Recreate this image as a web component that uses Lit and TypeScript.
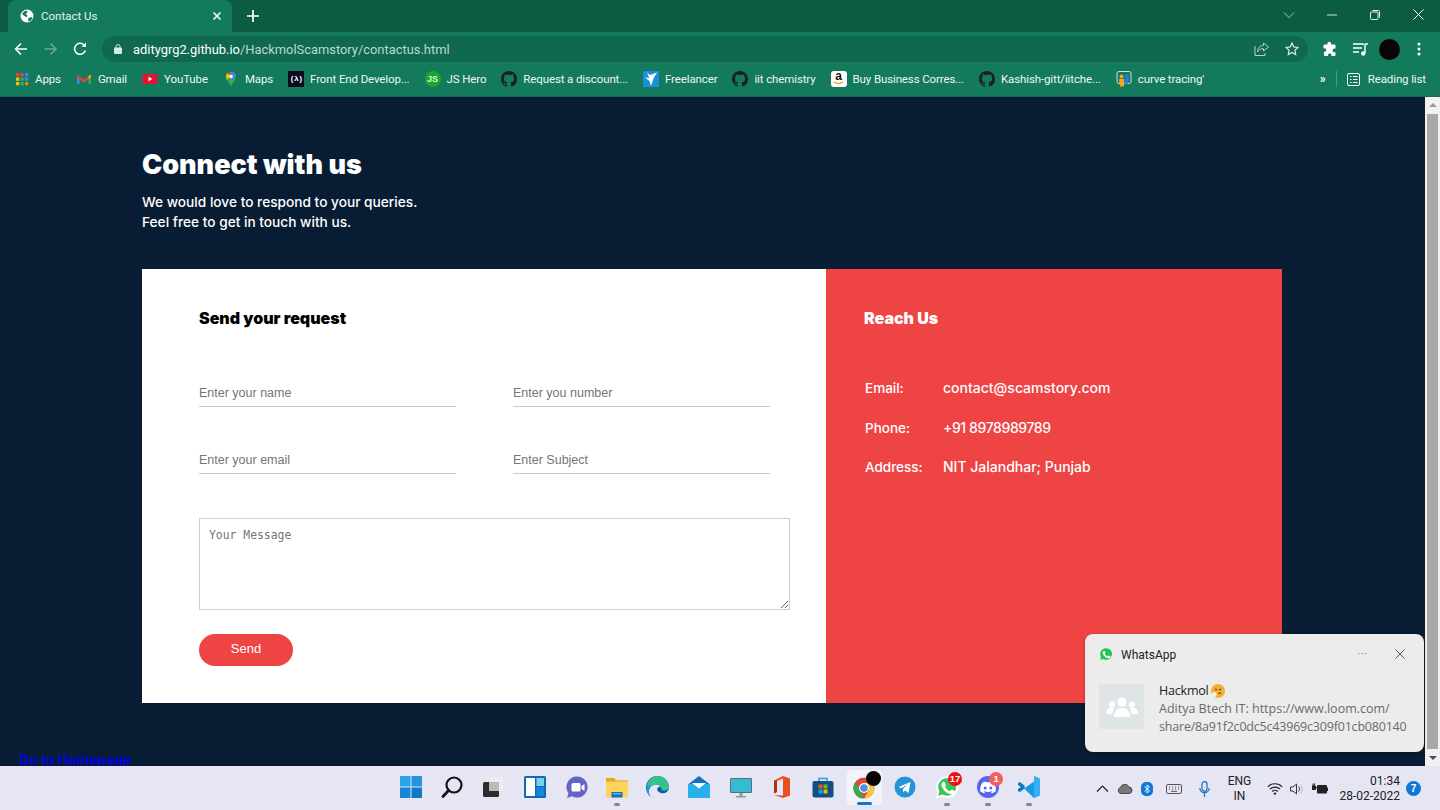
import {LitElement, css, html, svg} from "lit";
import {customElement} from "lit/decorators.js";

const GITHUB = "M8 0C3.58 0 0 3.58 0 8c0 3.54 2.29 6.53 5.47 7.59.4.07.55-.17.55-.38 0-.19-.01-.82-.01-1.49-2.01.37-2.53-.49-2.69-.94-.09-.23-.48-.94-.82-1.13-.28-.15-.68-.52-.01-.53.63-.01 1.08.58 1.23.82.72 1.21 1.87.87 2.33.66.07-.52.28-.87.51-1.07-1.78-.2-3.64-.89-3.64-3.95 0-.87.31-1.59.82-2.15-.08-.2-.36-1.02.08-2.12 0 0 .67-.21 2.2.82.64-.18 1.32-.27 2-.27.68 0 1.36.09 2 .27 1.53-1.04 2.2-.82 2.2-.82.44 1.1.16 1.92.08 2.12.51.56.82 1.27.82 2.15 0 3.07-1.87 3.75-3.65 3.95.29.25.54.73.54 1.48 0 1.07-.01 1.93-.01 2.2 0 .21.15.46.55.38A8.013 8.013 0 0016 8c0-4.42-3.58-8-8-8z";
const WA_BUBBLE = "M12 2a10 10 0 0 0-8.6 15L2 22l5.2-1.4A10 10 0 1 0 12 2z";
const WA_PHONE = "M8.6 6.8c-.3 0-.7.1-1 .5-.4.4-1.2 1.2-1.2 2.8s1.200 3.200 1.400 3.400c.2.200 2.300 3.700 5.700 5 2.800 1.100 3.400.900 4 .800.600-.100 2-.800 2.200-1.600.300-.800.300-1.400.200-1.600-.100-.100-.300-.200-.600-.400l-2.200-1.100c-.300-.100-.500-.200-.700.100l-1 1.300c-.200.200-.400.200-.700.100-1.300-.500-3.400-1.700-4.600-4.100-.200-.300 0-.500.100-.600l.700-.900c.100-.200.100-.400 0-.600L9.800 7.400c-.300-.600-.600-.600-.800-.600z";

const ghIcon = () => html`<svg width="16" height="16" viewBox="0 0 16 16"><path fill="#1b1f23" d=${GITHUB}/></svg>`;

const bookmarks = [
  {label: "Apps", icon: html`<svg width="14" height="16" viewBox="1 0 14 16">
    ${["#ea4335","#ea4335","#4285f4","#fbbc05","#34a853","#4285f4","#fbbc05","#34a853","#ea8600"].map((c, i) =>
      svg`<rect x=${2 + (i % 3) * 4.5} y=${2 + Math.floor(i / 3) * 4.5} width="3.300" height="3.300" fill=${c}/>`)}
  </svg>`},
  {label: "Gmail", icon: html`<svg width="16" height="16" viewBox="0 0 16 16">
    <path fill="#4285f4" d="M1 4v9h2.500V7z"/><path fill="#34a853" d="M15 4v9h-2.500V7z"/>
    <path fill="#ea4335" d="M1 3.500l7 5.300 7-5.300v3L8 11.500 1 6.500z"/><path fill="#fbbc05" d="M12.500 5.500L15 3.500V6l-2.500 2z"/></svg>`},
  {label: "YouTube", icon: html`<svg width="16" height="16" viewBox="0 0 16 16">
    <rect x="0.500" y="3" width="15" height="10" rx="2.500" fill="#e8112d"/><path fill="#fff" d="M6.500 5.800v4.400L10.500 8z"/></svg>`},
  {label: "Maps", icon: html`<svg width="16" height="16" viewBox="0 0 16 16">
    <path fill="#34a853" d="M8 15.500C6.800 12.500 3.500 10 3.500 6h9c0 4-3.300 6.500-4.500 9.500z"/>
    <path fill="#4285f4" d="M8 .5A5 5 0 0 1 13 5.500L9 8 7 3z"/><path fill="#ea4335" d="M8 .5A5 5 0 0 0 4.500 2L7 5z"/>
    <path fill="#fbbc05" d="M3 5.500a5 5 0 0 1 1.500-3.500L7 5 4 9a5 5 0 0 1-1-3.500z"/><circle cx="8" cy="5.500" r="1.800" fill="#fff"/></svg>`},
  {label: "Front End Develop...", icon: html`<span class="bm-fcc">(λ)</span>`},
  {label: "JS Hero", icon: html`<span class="bm-js">JS</span>`},
  {label: "Request a discount...", icon: ghIcon()},
  {label: "Freelancer", icon: html`<svg width="16" height="16" viewBox="0 0 16 16">
    <rect width="16" height="16" fill="#1c8fd8"/><path fill="#fff" d="M4 1.500l3 2.500 7-2.500-3.500 6L8 15 6.500 10 2 6.500l4.300.5z"/></svg>`},
  {label: "iit chemistry", icon: ghIcon()},
  {label: "Buy Business Corres...", icon: html`<span class="bm-amazon">a<svg width="11" height="4" viewBox="0 0 11 4"><path d="M1 .8c3 2.400 6 2.400 9 .2" fill="none" stroke="#f90" stroke-width="1.200"/></svg></span>`},
  {label: "Kashish-gitt/iitche...", icon: ghIcon()},
  {label: "curve tracing'", icon: html`<svg width="16" height="16" viewBox="0 0 16 16">
    <rect x="1" y="0.500" width="14" height="12" rx="2" fill="none" stroke="#cfe0da"/>
    <circle cx="5.500" cy="5.500" r="2" fill="#f6a623"/><path fill="#f6a623" d="M3 8h5v7.500H4z"/>
    <circle cx="11" cy="5" r="1.800" fill="#2b7de9"/><path fill="#2b7de9" d="M8 8l5-1.500-1 6-3 1z"/></svg>`},
];

const taskIcons = [
  {icon: html`<svg width="24" height="24" viewBox="0 0 24 24">
    <rect x="1" y="1" width="10.500" height="10.500" fill="#2aa3e8"/><rect x="12.500" y="1" width="10.500" height="10.500" fill="#2196e0"/>
    <rect x="1" y="12.500" width="10.500" height="10.500" fill="#1587d6"/><rect x="12.500" y="12.500" width="10.500" height="10.500" fill="#0f78c8"/></svg>`},
  {icon: html`<svg width="24" height="24" viewBox="0 0 24 24">
    <circle cx="14" cy="10" r="7.500" fill="none" stroke="#111" stroke-width="2.200"/><path d="M8.500 15.500L3 21.500" stroke="#111" stroke-width="2.800" stroke-linecap="round"/></svg>`},
  {icon: html`<svg width="24" height="24" viewBox="0 0 24 24">
    <rect x="2" y="7" width="16" height="15" rx="1.500" fill="#2b2b2b"/><rect x="8" y="2" width="14" height="14" rx="1.500" fill="#eee" fill-opacity=".85"/>
    <rect x="8" y="7" width="10" height="9" fill="#bbb"/></svg>`},
  {icon: html`<svg width="24" height="24" viewBox="0 0 24 24">
    <rect x="1" y="1" width="22" height="22" rx="1.500" fill="#1567b0"/><rect x="3" y="3" width="9" height="18" fill="#fff"/>
    <rect x="13.500" y="3" width="7.500" height="8" fill="#7fd0ef"/><rect x="13.500" y="12" width="7.500" height="9" fill="#0f8ade"/></svg>`},
  {icon: html`<svg width="24" height="24" viewBox="0 0 24 24">
    <path fill="#6264c8" d="M13 1.500a10.500 10.500 0 1 1-5 19.700l-5 1.800 1.500-4.800A10.500 10.500 0 0 1 13 1.500z"/>
    <rect x="7.500" y="8" width="9" height="8.500" rx="1.500" fill="#fff"/><path fill="#fff" d="M17.500 11l3-2v7l-3-2z"/></svg>`},
  {dot: true, icon: html`<svg width="24" height="24" viewBox="0 0 24 24">
    <path fill="#e2a818" d="M1 3h8l2 2.500h12V9H1z"/><rect x="1" y="6.500" width="22" height="16" rx="1" fill="#fdd35c"/>
    <rect x="6.500" y="17" width="11" height="5.500" fill="#1d6fb8"/><rect x="8" y="18" width="8" height="1.500" fill="#59b4ec"/></svg>`},
  {icon: html`<svg width="24" height="24" viewBox="0 0 24 24">
    <path fill="#0f5fa8" d="M23 12.500A11.500 11.500 0 1 0 5 22c-3-3-3-8 .500-11 3-2.500 8-2 9.500 1-1.500-.500-3.500 0-3.800 2-.300 3 4 5 7.800 4 2.500-1 4-3.500 4-5.500z"/>
    <path fill="#34c48b" d="M1 10.500C2.500 4.500 7 1 12 1c6 0 11 4.500 11 11.500 0 1.500-2 3-5 3-3 0-2-1.500-3-3.500-1.500-3-6.500-3.500-9.500-1-1 .800-3.500 1-4.500-.500z"/>
    <path fill="#1b9de2" d="M5 22C1 19 0 15 1 10.500c1.500 1 3 .800 4.500 0-3.500 3-3.500 8-.500 11.500z"/></svg>`},
  {icon: html`<svg width="24" height="24" viewBox="0 0 24 24">
    <path fill="#1170c0" d="M1 9.500L12 1l11 8.500V11H1z"/><rect x="1" y="9" width="22" height="14" fill="#29b0ea"/>
    <path fill="#fff" d="M5 8h14l-7 5.500z"/></svg>`},
  {icon: html`<svg width="24" height="24" viewBox="0 0 24 24">
    <rect x="1" y="3" width="22" height="15" rx="1" fill="#5d7078"/><rect x="2" y="4" width="20" height="13" fill="#33bcd2"/>
    <rect x="10.500" y="18" width="3" height="3" fill="#8a9ba3"/><rect x="7" y="21" width="10" height="1.500" fill="#8a9ba3"/></svg>`},
  {icon: html`<svg width="24" height="24" viewBox="0 0 24 24">
    <path fill="#e8501f" d="M13 1l7 2.500v17L13 23l-9-3 9 .5V3.500L7 6v11l-3 1.500V5.500z"/><path fill="#b42d12" d="M4 5.500L7 6v11l-3 1.500z"/></svg>`},
  {icon: html`<svg width="24" height="24" viewBox="0 0 24 24">
    <path d="M8 6V3.500h8V6" fill="none" stroke="#23a6d5" stroke-width="1.500"/><rect x="1.500" y="6" width="21" height="16.500" rx="2" fill="#0f4f86"/>
    <rect x="7.500" y="9.500" width="4" height="4" fill="#f25022"/><rect x="12.500" y="9.500" width="4" height="4" fill="#7fba00"/>
    <rect x="7.500" y="14.500" width="4" height="4" fill="#00a4ef"/><rect x="12.500" y="14.500" width="4" height="4" fill="#ffb900"/></svg>`},
  {active: true, icon: html`<svg width="24" height="24" viewBox="0 0 24 24">
    <circle cx="12" cy="13" r="10.500" fill="#e0483a"/><path fill="#f7c744" d="M12 8h9.500A10.500 10.500 0 0 1 12 23.500l4.500-8z"/>
    <path fill="#3aa757" d="M3.200 7L8 15.500 12 23.500A10.500 10.500 0 0 1 3.200 7z"/><circle cx="12" cy="13" r="5" fill="#fff"/><circle cx="12" cy="13" r="3.800" fill="#4a8fe0"/></svg>`},
  {icon: html`<svg width="24" height="24" viewBox="0 0 24 24">
    <circle cx="12" cy="12" r="10.500" fill="#2295d4"/><path fill="#fff" d="M5.500 12l12-5-2 11-3.500-2.500-1.800 1.800-.500-3L15 9l-6.500 4.200z"/></svg>`},
  {dot: true, badge: "17", icon: html`<svg width="24" height="24" viewBox="0 0 24 24">
    <path fill="#fff" stroke="#fff" stroke-width="2" d=${WA_BUBBLE}/><path fill="#3cc455" transform="translate(1.400 1.400) scale(.88)" d=${WA_BUBBLE}/>
    <path fill="#fff" d=${WA_PHONE}/></svg>`},
  {dot: true, badge: "1", soft: true, icon: html`<svg width="24" height="24" viewBox="0 0 24 24">
    <circle cx="12" cy="12" r="11" fill="#5865f2"/>
    <path fill="#fff" d="M17.500 7.500A13 13 0 0 0 14.200 6.500l-.4.800a12 12 0 0 0-3.600 0l-.4-.8A13 13 0 0 0 6.500 7.500C4.500 10.500 4 13.400 4.200 16.300a13 13 0 0 0 4 2l.8-1.300-1.300-.6.300-.3a9.300 9.300 0 0 0 8 0l.3.300-1.300.6.800 1.300a13 13 0 0 0 4-2c.3-3.400-.5-6.300-2.300-8.800z"/>
    <circle cx="9.200" cy="13" r="1.500" fill="#5865f2"/><circle cx="14.800" cy="13" r="1.500" fill="#5865f2"/></svg>`},
  {dot: true, icon: html`<svg width="24" height="24" viewBox="0 0 24 24">
    <path fill="#0f7ac4" d="M1 8l2-1 5 4-2 2.500-5-3.500z"/><path fill="#0f7ac4" d="M1 16l2 1 5-4-2-2.500-5 3.500z"/>
    <path fill="#1a9ae8" d="M17 1l6 2.800v16.400L17 23 7 13.500 17 6.500v11l-6-5.500 6-4.500z"/><path fill="#36b2f2" d="M17 1l6 2.800v16.400L17 23z"/></svg>`},
];

const contact = [
  {label: "Email:", value: "contact@scamstory.com"},
  {label: "Phone:", value: "+91 8978989789", digits: true},
  {label: "Address:", value: "NIT Jalandhar; Punjab"},
];

@customElement("app-root")
export class AppRoot extends LitElement {
  static styles = css`
    :host {
      display: block;
      height: 810px;
      overflow: hidden;
      font-family: Roboto, sans-serif;
    }
    .window {
      position: relative;
      display: flex;
      flex-direction: column;
      height: 810px;
    }

    /* browser chrome */
    .tabstrip {
      height: 32px;
      display: flex;
      align-items: flex-end;
      padding-left: 8px;
      background: #0b5c43;
      color: #fff;
    }
    .tab {
      width: 224px;
      height: 32px;
      box-sizing: border-box;
      padding: 0 10px 0 12px;
      display: flex;
      align-items: center;
      gap: 7px;
      background: #147a5c;
      border-radius: 8px 8px 0 0;
      font: 11.500px Roboto, sans-serif;
    }
    .tab span { flex: 1; color: #e6f2ee; }
    .newtab { margin: 0 0 10px 15px; display: flex; }
    .winctl {
      margin-left: auto;
      display: flex;
      align-items: center;
      height: 32px;
      padding-bottom: 3px;
      box-sizing: border-box;
    }
    .winctl svg { display: block; }
    .winctl .caret { margin-right: 32px; }
    .winctl .min { margin-right: 33px; }
    .winctl .max { margin-right: 33px; }
    .winctl .close { margin-right: 16px; }
    .toolbar {
      height: 34px;
      display: flex;
      align-items: center;
      background: #147a5c;
      padding-left: 14px;
    }
    .nav { display: flex; gap: 15px; margin-right: 15px; }
    .omnibox {
      width: 1206px;
      height: 26px;
      box-sizing: border-box;
      border-radius: 13px;
      background: #0f6850;
      display: flex;
      align-items: center;
      padding: 0 9px 0 12px;
      gap: 7px;
      font: 12.900px Roboto, sans-serif;
      color: #bcd8cf;
    }
    .omnibox b { font-weight: 400; color: #fff; }
    .omnibox .url { flex: 1; white-space: nowrap; margin-left: 4px; }
    .omnibox .star { margin-left: 9px; }
    .tools { display: flex; align-items: center; margin-left: 14px; }
    .profile { width: 21px; height: 21px; border-radius: 50%; background: #0a0404; margin: 0 17px 0 11px; }
    .bookmarks {
      height: 31px;
      box-sizing: border-box;
      display: flex;
      align-items: center;
      gap: 15px;
      padding: 0 14px 4px 15px;
      background: #147a5c;
      border-bottom: 1px solid #0f6a50;
    }
    .bm { display: flex; align-items: center; gap: 6px; color: #eef6f3; font: 11.500px Roboto, sans-serif; letter-spacing: -0.12px; white-space: nowrap; }
    .bm-fcc {
      width: 16px; height: 16px; background: #0a0a23; color: #fff;
      font: 700 8px/16px "Liberation Mono", monospace; text-align: center; letter-spacing: -0.5px;
    }
    .bm-js {
      width: 16px; height: 16px; border-radius: 50%; background: #1fa32e; color: #dff5d8;
      font: 700 9px/16px "Liberation Sans", sans-serif; text-align: center; letter-spacing: 0;
    }
    .bm-amazon {
      width: 16px; height: 16px; border-radius: 3px; background: #fff; color: #111;
      font: 700 12px/11px "Liberation Sans", sans-serif; text-align: center; display: block;
    }
    .bm-amazon svg { display: block; margin: -1px auto 0; }
    .bm-more { margin-left: auto; display: flex; align-items: center; gap: 10px; }
    .bm-sep { width: 1px; height: 16px; background: #4a9a82; }
    .bm-chev { color: #fff; font: 700 12px Roboto, sans-serif; }
    .bm-reading { display: flex; align-items: center; gap: 8px; color: #eef6f3; font: 11.500px Roboto, sans-serif; letter-spacing: -0.12px; }

    /* page */
    .viewport {
      flex: 1;
      min-height: 0;
      display: flex;
      overflow: hidden;
    }
    .page {
      flex: 1;
      background: #081d33;
      padding-top: 53px;
    }
    .inner { margin-left: 142px; width: 1140px; }
    h1 {
      margin: 0;
      font: 900 27px/30px Inter, sans-serif;
      color: #fff;
    }
    .lead {
      margin: 12px 0 37px;
      font: 500 13.700px/20px Inter, sans-serif;
      color: #fff;
    }
    .card { display: flex; height: 434px; }
    .form {
      width: 684px;
      box-sizing: border-box;
      background: #fff;
      padding: 38px 35px 0 57px;
    }
    h2 {
      margin: 0;
      font: 900 16px/22px Inter, sans-serif;
      color: #000;
    }
    .fields {
      margin-top: 44px;
      display: grid;
      grid-template-columns: 257px 257px;
      column-gap: 57px;
      row-gap: 33px;
    }
    input {
      display: block;
      width: 100%;
      height: 34px;
      box-sizing: border-box;
      border: 0;
      border-bottom: 1px solid #c8c8c8;
      padding: 6px 0 0;
      outline: none;
      font: 12.500px "Liberation Sans", sans-serif;
      background: transparent;
    }
    input::placeholder { color: #757575; }
    textarea {
      display: block;
      width: 591px;
      height: 92px;
      box-sizing: border-box;
      margin-top: 44px;
      border: 1px solid #cfcfcf;
      padding: 9px 9px;
      outline: none;
      font: 11.400px "DejaVu Sans Mono", monospace;
    }
    textarea::placeholder { color: #757575; }
    .send {
      display: block;
      margin-top: 24px;
      width: 94px;
      height: 32px;
      padding: 0 0 4px;
      border: 0;
      border-radius: 16px;
      background: #ef4444;
      color: #fff;
      font: 13px "Liberation Sans", sans-serif;
    }
    .reach {
      flex: 1;
      background: #ef4444;
      color: #fff;
      padding: 38px 0 0 38px;
    }
    .reach h2 { color: #fff; }
    .rows { margin-top: 49px; padding-left: 1px; display: flex; flex-direction: column; gap: 19.500px; }
    .row { display: flex; font: 500 14px/20px Inter, sans-serif; }
    .row .k { width: 78px; font-size: 13.500px; }
    .row .digits { letter-spacing: -0.4px; }
    .home {
      display: block;
      margin-top: 47px;
      padding-left: 19px;
      color: #0000ee;
      font: 600 13.900px/20px Inter, sans-serif;
      text-decoration: underline;
    }

    /* scrollbar */
    .scroll {
      width: 15px;
      background: #f1f1f1;
      display: flex;
      flex-direction: column;
      align-items: center;
      justify-content: space-between;
      padding: 6px 0;
      box-sizing: border-box;
    }
    .thumb { flex: 1; width: 11px; margin: 7px 0; background: #a8a8a8; }
    .arrow-up { border: 4px solid transparent; border-top: 0; border-bottom: 4px solid #9a9a9a; }
    .arrow-down { border: 4px solid transparent; border-bottom: 0; border-top: 4px solid #505050; }

    /* taskbar */
    .taskbar {
      height: 44px;
      display: grid;
      grid-template-columns: 1fr auto 1fr;
      background: #e5e5f3;
    }
    .apps { grid-column: 2; display: flex; }
    .app {
      position: relative;
      width: 41.200px;
      padding-bottom: 2px;
      box-sizing: border-box;
      display: flex;
      align-items: center;
      justify-content: center;
    }
    .app svg { display: block; position: relative; }
    .app.active::before {
      content: "";
      position: absolute;
      inset: 4px 3px 5px 3px;
      background: #f3f3fa;
      border-radius: 4px;
    }
    .dot { position: absolute; left: 18px; bottom: 4px; width: 6px; height: 3px; border-radius: 2px; background: #858590; }
    .bar { position: absolute; left: 13px; bottom: 5px; width: 15px; height: 3px; border-radius: 2px; background: #0f78d4; }
    .badge {
      position: absolute;
      top: 6px;
      left: 22px;
      min-width: 14px;
      height: 14px;
      border-radius: 7px;
      background: #f01010;
      color: #fff;
      font: 700 9.500px/14px "Liberation Sans", sans-serif;
      text-align: center;
    }
    .badge.soft { background: #f0605c; }
    .avatar { position: absolute; top: 5px; left: 22px; width: 15px; height: 15px; border-radius: 50%; background: #0a0404; }
    .tray {
      grid-column: 3;
      display: flex;
      align-items: center;
      justify-content: flex-end;
      padding: 1px 19px 0 0;
      color: #222;
      font: 12px/15px Roboto, sans-serif;
    }
    .tray svg { display: block; }
    .lang { width: 34px; margin: 0 11px 0 12px; text-align: center; }
    .clock { text-align: right; margin: 0 6px 0 11px; }
    .count {
      width: 15px; height: 15px; border-radius: 50%; background: #0f78d4; color: #fff;
      font: 700 10px/15px "Liberation Sans", sans-serif; text-align: center;
    }

    /* notification */
    .toast {
      position: absolute;
      left: 1085px;
      top: 634px;
      width: 339px;
      height: 118px;
      box-sizing: border-box;
      padding: 12px 14px 0 14px;
      background: #ececec;
      border-radius: 8px;
      box-shadow: 0 1px 3px rgba(0, 0, 0, .35);
      color: #222;
    }
    .toast-head { display: flex; align-items: center; height: 16px; font: 12px Roboto, sans-serif; }
    .toast-head svg { display: block; }
    .toast-head .name { margin-left: 8px; flex: 1; padding-top: 2px; }
    .toast-head .more { color: #888; font-size: 12px; margin-right: 27px; letter-spacing: 0.5px; }
    .toast-head .x { margin-right: 5px; }
    .toast-body { display: flex; margin-top: 22px; }
    .toast-pic {
      width: 45px; height: 45px; background: #dfe5e7;
      display: flex; align-items: center; justify-content: center;
    }
    .toast-text { margin: -2px 0 0 15px; font: 12.500px/18px "Open Sans", sans-serif; color: #6a6a6a; letter-spacing: -0.2px; white-space: nowrap; }
    .toast-text .wide { letter-spacing: 0; }
    .toast-title { display: flex; align-items: center; gap: 2px; color: #222; }
    .toast-title svg { display: block; }
  `;

  private renderChrome() {
    return html`
      <div class="tabstrip">
        <div class="tab">
          <svg width="14" height="14" viewBox="0 0 14 14"><circle cx="7" cy="7" r="6.500" fill="#fff"/>
            <path fill="#147a5c" d="M2 5l2-2.500 3-1 .5 2-2 1.500 2 1.500-.5 1.500-2-.5L2 5zM8 9.500l3-1.500 1.500.5-1.500 3-2.500 1z"/></svg>
          <span>Contact Us</span>
          <svg width="10" height="10" viewBox="0 0 10 10"><path d="M1.500 1.500l7 7M8.500 1.500l-7 7" stroke="#fff" stroke-width="1.500"/></svg>
        </div>
        <div class="newtab"><svg width="12" height="12" viewBox="0 0 12 12"><path d="M6 0v12M0 6h12" stroke="#fff" stroke-width="1.700"/></svg></div>
        <div class="winctl">
          <svg class="caret" width="12" height="8" viewBox="0 0 12 8"><path d="M1 1.500l5 5 5-5" fill="none" stroke="#a9c9bd" stroke-width="1"/></svg>
          <svg class="min" width="10" height="2" viewBox="0 0 10 2"><path d="M0 1h10" stroke="#cfe3db"/></svg>
          <svg class="max" width="10" height="10" viewBox="0 0 10 10"><rect x=".5" y="2" width="7.500" height="7.500" rx="1" fill="none" stroke="#e6f2ee"/><path d="M2.500 .5h6a1 1 0 0 1 1 1v6" fill="none" stroke="#e6f2ee"/></svg>
          <svg class="close" width="11" height="11" viewBox="0 0 11 11"><path d="M.5 .5l10 10M10.500 .5l-10 10" stroke="#fff"/></svg>
        </div>
      </div>
      <div class="toolbar">
        <div class="nav">
          <svg width="14" height="14" viewBox="0 0 14 14"><path d="M13 7H1.500M7 1.500L1.500 7 7 12.500" fill="none" stroke="#fff" stroke-width="1.500"/></svg>
          <svg width="15" height="14" viewBox="0 0 14 14"><path d="M1 7h11.500M7 1.500L12.500 7 7 12.500" fill="none" stroke="#6aa893" stroke-width="1.500"/></svg>
          <svg width="14" height="14" viewBox="0 0 14 14"><path d="M12.300 8.500A5.500 5.500 0 1 1 11 3" fill="none" stroke="#fff" stroke-width="1.500"/><path d="M13 .5v4.500H8.500z" fill="#fff"/></svg>
        </div>
        <div class="omnibox">
          <svg width="8" height="10" viewBox="0 0 8 10"><rect y="3.500" width="8" height="6.500" rx="1" fill="#d8e8e2"/><path d="M2 4V2.500a2 2 0 0 1 4 0V4" fill="none" stroke="#d8e8e2"/></svg>
          <div class="url"><b>aditygrg2.github.io</b>/HackmolScamstory/contactus.html</div>
          <svg width="15" height="14" viewBox="0 0 15 14"><path d="M9.500 1l5 4-5 4V6.700C6 6.700 4.500 8 3.500 10 3.800 6 6 3.500 9.500 3.300z" fill="none" stroke="#b5d2c8"/><path d="M1 4v9.500h10V11" fill="none" stroke="#b5d2c8"/></svg>
          <svg class="star" width="14" height="14" viewBox="0 0 14 14"><path d="M7 1l1.800 3.900 4.200.5-3.100 2.900.8 4.200L7 10.400l-3.700 2.100.8-4.200L1 5.400l4.200-.5z" fill="none" stroke="#d8e8e2" stroke-width="1.200"/></svg>
        </div>
        <div class="tools">
          <svg width="15" height="15" viewBox="0 0 15 15"><path fill="#fff" d="M5.500 1a1.800 1.800 0 0 1 3.500 0v1.500h3.500a1 1 0 0 1 1 1V6.500h-1a1.900 1.900 0 0 0 0 3.800h1V13a1 1 0 0 1-1 1h-3v-1a1.800 1.800 0 0 0-3.500 0v1h-3a1 1 0 0 1-1-1V9.800H2.500a1.800 1.800 0 0 0 0-3.600H1.500v-2.700a1 1 0 0 1 1-1h3z"/></svg>
          <svg style="margin-left:16px" width="15" height="13" viewBox="0 0 15 13"><path d="M0 1h11M0 5h9M0 9h6" stroke="#fff" stroke-width="1.400"/><path d="M12 1v9" stroke="#fff" stroke-width="1.400"/><path d="M12 1h3" stroke="#fff" stroke-width="1.400"/><circle cx="10.300" cy="10.500" r="2.200" fill="#fff"/></svg>
          <div class="profile"></div>
          <svg width="4" height="14" viewBox="0 0 4 14"><circle cx="2" cy="2" r="1.500" fill="#fff"/><circle cx="2" cy="7" r="1.500" fill="#fff"/><circle cx="2" cy="12" r="1.500" fill="#fff"/></svg>
        </div>
      </div>
      <div class="bookmarks">
        ${bookmarks.map(b => html`<div class="bm">${b.icon}<span>${b.label}</span></div>`)}
        <div class="bm-more">
          <span class="bm-chev">»</span>
          <span class="bm-sep"></span>
          <div class="bm-reading">
            <svg width="13" height="13" viewBox="0 0 13 13"><rect x=".5" y=".5" width="12" height="12" rx="1.500" fill="none" stroke="#fff"/><path d="M3 3.500h1.500M3 6.500h1.500M3 9.500h1.500M6 3.500h4.500M6 6.500h4.500M6 9.500h4.500" stroke="#fff"/></svg>
            Reading list
          </div>
        </div>
      </div>
    `;
  }

  private renderTray() {
    return html`
      <div class="tray">
        <svg width="13" height="7" viewBox="0 0 13 7"><path d="M1 6.500l5.500-5.500L12 6.500" fill="none" stroke="#222" stroke-width="1.100"/></svg>
        <svg style="margin-left:8px" width="16" height="10" viewBox="0 0 16 10"><path d="M4 9.500a3 3 0 0 1-.5-5.900 4.500 4.500 0 0 1 8.500-.6 3.300 3.300 0 0 1 .5 6.500z" fill="#777" stroke="#333" stroke-width=".8"/></svg>
        <svg style="margin-left:8px" width="12" height="14" viewBox="0 0 12 14"><rect width="12" height="14" rx="5" fill="#0f78d4"/><path d="M3.500 4.500l5 4.500L6 11V3l2.500 2-5 4.500" fill="none" stroke="#fff" stroke-width=".9"/></svg>
        <svg style="margin-left:13px" width="16" height="10" viewBox="0 0 16 10"><rect x=".5" y=".5" width="15" height="9" rx="1.500" fill="none" stroke="#555"/><path d="M3 3h1M6 3h1M9 3h1M12 3h1M3 5h1M6 5h1M9 5h1M12 5h1M5 7.300h6" stroke="#555"/></svg>
        <svg style="margin-left:17px" width="11" height="16" viewBox="0 0 11 16"><rect x="3" y=".7" width="5" height="9.500" rx="2.500" fill="none" stroke="#1a6fc4" stroke-width="1.200"/><path d="M.8 7a4.700 4.700 0 0 0 9.400 0M5.500 12v4" fill="none" stroke="#1a6fc4" stroke-width="1.200"/></svg>
        <div class="lang">ENG<br>IN</div>
        <svg width="16" height="12" viewBox="0 0 16 12"><path d="M.8 3.800a10 10 0 0 1 14.400 0M3 6.200a7 7 0 0 1 10 0M5.200 8.500a4 4 0 0 1 5.600 0" fill="none" stroke="#222" stroke-width="1.200"/><circle cx="8" cy="10.600" r="1.200" fill="#222"/></svg>
        <svg style="margin-left:7px" width="15" height="12" viewBox="0 0 15 12"><path d="M.5 4h2.500L6.500 1v10L3 8H.5z" fill="none" stroke="#333"/><path d="M8.500 3.500a3.500 3.500 0 0 1 0 5" fill="none" stroke="#444"/><path d="M10.500 1.500a6.500 6.500 0 0 1 0 9" fill="none" stroke="#bbb"/></svg>
        <svg style="margin-left:7px" width="16" height="13" viewBox="0 0 16 13"><rect x="5" y="3" width="10" height="8.500" rx="1" fill="#222"/><rect x="15" y="5.500" width="1" height="3.500" fill="#222"/><path d="M0 4h3.500v3.500H0zM3.500 5.700h2M1 4V1.500M2.500 4V1.500" stroke="#222" fill="#222"/></svg>
        <div class="clock">01:34<br>28-02-2022</div>
        <div class="count">7</div>
      </div>
    `;
  }

  private renderToast() {
    return html`
      <div class="toast">
        <div class="toast-head">
          <svg width="14" height="14" viewBox="0 0 24 24"><path fill="#25c354" d=${WA_BUBBLE}/><path fill="#fff" d=${WA_PHONE}/></svg>
          <span class="name">WhatsApp</span>
          <span class="more">···</span>
          <svg class="x" width="10" height="10" viewBox="0 0 10 10"><path d="M.5 .5l9 9M9.500 .5l-9 9" stroke="#555"/></svg>
        </div>
        <div class="toast-body">
          <div class="toast-pic">
            <svg width="32" height="20" viewBox="0 0 32 20">
              <circle cx="16" cy="5" r="4.500" fill="#fff"/><path fill="#fff" d="M8 20c0-6 3-9 8-9s8 3 8 9z"/>
              <circle cx="6" cy="7.500" r="3" fill="#fff"/><path fill="#fff" d="M0 17c0-4 2-6.500 6-6.500 1 0 1.700.2 2.500.5C7 13 6.500 15 6.500 17z"/>
              <circle cx="26" cy="7.500" r="3" fill="#fff"/><path fill="#fff" d="M32 17c0-4-2-6.500-6-6.500-1 0-1.700.2-2.500.5 1.500 2 2 4 2 6z"/>
            </svg>
          </div>
          <div class="toast-text">
            <div class="toast-title">Hackmol<svg width="14" height="14" viewBox="0 0 14 14"><circle cx="7" cy="7" r="7" fill="#f5ae2e"/><path d="M4 5l2 1M10 5L8 6" stroke="#5a3a10" stroke-width="1.100"/><path d="M7 9.500c1.500-1 3-.5 3.500.5" fill="none" stroke="#5a3a10"/><path fill="#f4f0e6" d="M1 9c1-1.500 3.500-1.500 4.500 0 .5 1.500-.5 4-2 4.500C2 13 .5 11 1 9z"/></svg></div>
            <div class="wide">Aditya Btech IT: https://www.loom.com/</div>
            <div>share/8a91f2c0dc5c43969c309f01cb080140</div>
          </div>
        </div>
      </div>
    `;
  }

  protected render() {
    return html`
      <div class="window">
        ${this.renderChrome()}
        <div class="viewport">
          <main class="page">
            <div class="inner">
              <h1>Connect with us</h1>
              <p class="lead">We would love to respond to your queries.<br>Feel free to get in touch with us.</p>
              <div class="card">
                <section class="form">
                  <h2>Send your request</h2>
                  <div class="fields">
                    <input placeholder="Enter your name">
                    <input placeholder="Enter you number">
                    <input placeholder="Enter your email">
                    <input placeholder="Enter Subject">
                  </div>
                  <textarea placeholder="Your Message"></textarea>
                  <button class="send">Send</button>
                </section>
                <section class="reach">
                  <h2>Reach Us</h2>
                  <div class="rows">
                    ${contact.map(c => html`<div class="row"><span class="k">${c.label}</span><span class=${c.digits ? "digits" : ""}>${c.value}</span></div>`)}
                  </div>
                </section>
              </div>
            </div>
            <a class="home" href="#">Go to Homepage</a>
          </main>
          <div class="scroll"><span class="arrow-up"></span><span class="thumb"></span><span class="arrow-down"></span></div>
        </div>
        <footer class="taskbar">
          <div class="apps">
            ${taskIcons.map((t: any) => html`<div class="app ${t.active ? "active" : ""}">
              ${t.icon}
              ${t.dot ? html`<span class="dot"></span>` : ""}
              ${t.active ? html`<span class="bar"></span><span class="avatar"></span>` : ""}
              ${t.badge ? html`<span class="badge ${t.soft ? "soft" : ""}">${t.badge}</span>` : ""}
            </div>`)}
          </div>
          ${this.renderTray()}
        </footer>
        ${this.renderToast()}
      </div>
    `;
  }
}
